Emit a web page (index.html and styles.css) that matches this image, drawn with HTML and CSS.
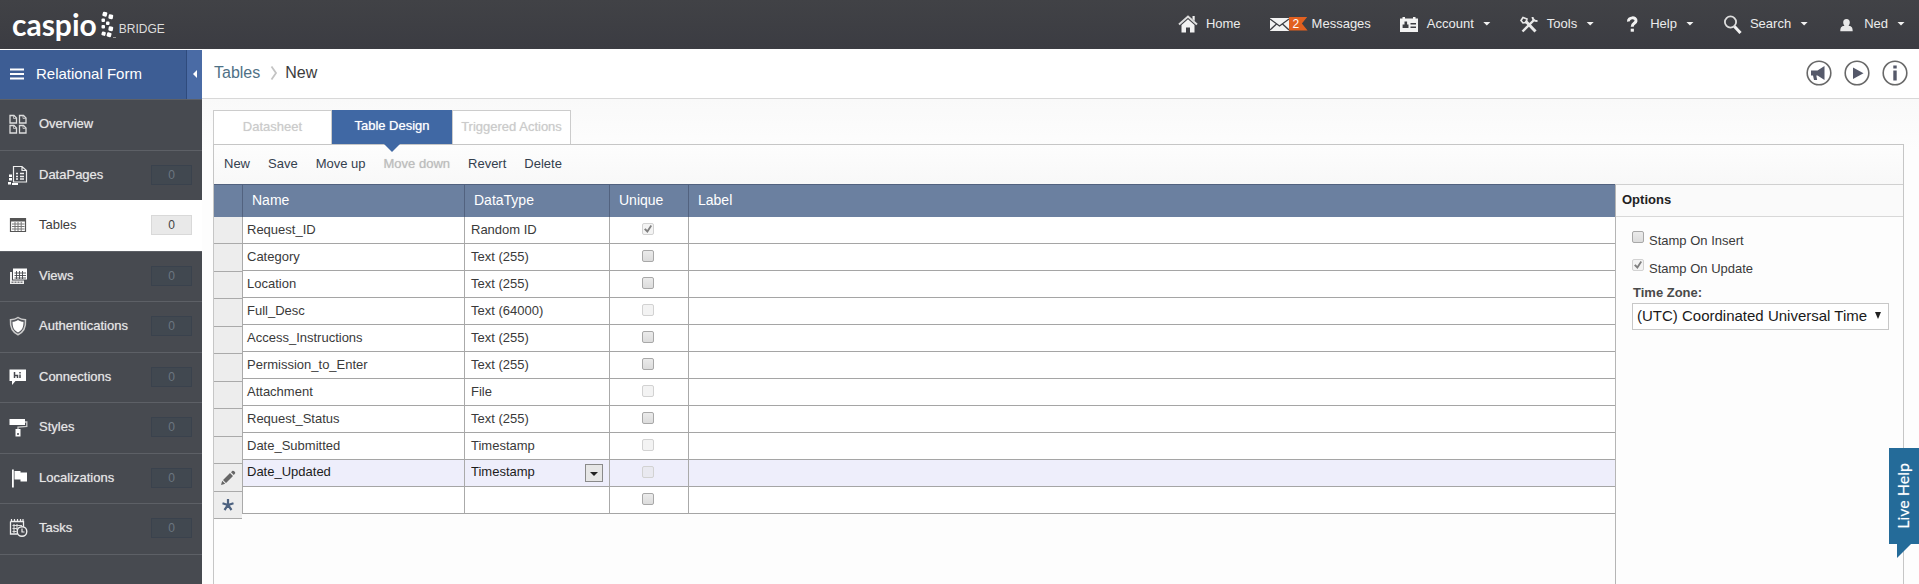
FILE: index.html
```html
<!DOCTYPE html>
<html lang="en">
<head>
<meta charset="utf-8">
<title>Caspio Bridge - Tables</title>
<link rel="stylesheet" href="styles.css">
</head>
<body>
<header class="topbar">
  <a class="logo" href="#">
    <span class="logo-word">caspio</span>
    <svg class="logo-dots" viewBox="0 0 17 30" width="17" height="30" aria-hidden="true">
      <g fill="#fff">
        <rect x="2.500" y="2" width="4.500" height="4.500" rx="1" transform="rotate(15 5 4.500)"/>
        <rect x="8.500" y="4.500" width="4.500" height="4.500" rx="1" transform="rotate(10 11 7)"/>
        <rect x="1.500" y="8.500" width="3.500" height="3.500" rx="1"/>
        <rect x="6" y="11.500" width="3.500" height="3.500" rx="1"/>
        <rect x="1.500" y="15" width="3.500" height="3.500" rx="1"/>
        <rect x="8.500" y="16.500" width="4.500" height="4.500" rx="1" transform="rotate(10 11 19)"/>
        <rect x="1.500" y="21.500" width="4" height="4" rx="1" transform="rotate(15 3 24)"/>
        <rect x="6.500" y="22.500" width="4.500" height="4.500" rx="1" transform="rotate(15 9 26)"/>
      </g>
      <path d="M13 27.500h3" stroke="#999" stroke-width="1"/>
    </svg>
    <span class="logo-sub">BRIDGE</span>
  </a>
  <nav class="topnav">
    <a class="nav-item" href="#"><svg class="nav-icon" viewBox="0 0 20 20"><path d="M1 10.500 10 2.500l9 8" fill="none" stroke="#ddd" stroke-width="2"/><path d="M14.500 2h2.200v5l-2.200-2zM3.500 11 10 5.200l6.500 5.800v7.500h-4.500v-5H8v5H3.500z" fill="#f2f2f2"/></svg>Home</a>
    <a class="nav-item nav-messages" href="#"><span class="mail"><svg class="nav-icon" viewBox="0 0 20 20"><path d="M1 4h19v13H1z" fill="#f2f2f2"/><path d="m1 5 9.500 7L20 5M1 16l6.500-6M20 16l-6.500-6" fill="none" stroke="#3d3e43" stroke-width="1.300"/></svg><span class="flag">2</span></span>Messages</a>
    <a class="nav-item" href="#"><svg class="nav-icon" viewBox="0 0 20 20"><path d="M1 4.500h2.500V3H6v1.500h8V3h2.500v1.500H19V18H1z" fill="#f2f2f2"/><path d="M5.500 7.500h2.600v3h1.400V14H3.600v-3.500h1.900zM11.500 9h5.500v1.600h-5.500zM11.500 12.500h5.500v1.600h-5.500z" fill="#3d3e43"/></svg>Account<i class="caret"></i></a>
    <a class="nav-item" href="#"><svg class="nav-icon" viewBox="0 0 20 20"><g fill="none" stroke="#e8e8e8"><path d="m6.500 7 10 10.500" stroke-width="3"/><path d="M3.500 17.500 15 6" stroke-width="2.400"/><path d="M13.500 3c.2 3 1.500 4 5 4" stroke-width="2"/><path d="m2 6.500 2-3 4 1.500-1 3.500-3 .500z" stroke-width="1.600"/></g></svg>Tools<i class="caret"></i></a>
    <a class="nav-item" href="#"><svg class="nav-icon" viewBox="0 0 20 20"><path d="M6.500 7.500C6 3 14.500 2.500 14 7c-.300 2.500-3.800 2.300-3.800 5.700" fill="none" stroke="#f2f2f2" stroke-width="3"/><path d="M8.700 14.700h3.200v3H8.700z" fill="#f2f2f2"/></svg>Help<i class="caret"></i></a>
    <a class="nav-item" href="#"><svg class="nav-icon" viewBox="0 0 20 20"><circle cx="8.500" cy="8" r="5.600" fill="none" stroke="#ddd" stroke-width="1.800"/><path d="m12.500 12.500 6 6.500" stroke="#f2f2f2" stroke-width="3"/></svg>Search<i class="caret"></i></a>
    <a class="nav-item" href="#"><svg class="nav-icon" viewBox="0 0 20 20"><path d="M10.500 5c2.300 0 3.300 1.500 3.300 3.500 0 1.700-.8 2.500-1.300 3.300 2.500.3 4.200 1 4.200 5.500h-12.400c0-4.500 1.700-5.200 4.200-5.500-.5-.8-1.300-1.600-1.300-3.300C7.200 6.500 8.200 5 10.500 5z" fill="#e8e8e8"/></svg>Ned<i class="caret"></i></a>
  </nav>
</header>

<div class="layout">
  <aside class="sidebar">
    <div class="app-head">
      <button class="app-menu" type="button"><svg viewBox="0 0 14 12" width="14" height="12" aria-hidden="true"><path d="M0 1.500h14M0 6h14M0 10.500h14" stroke="#fff" stroke-width="2.200"/></svg>Relational Form</button>
      <button class="collapse" type="button" aria-label="Collapse"><svg viewBox="0 0 6 8" width="4" height="8" preserveAspectRatio="none"><path d="M6 0v8L0 4z" fill="#fff"/></svg></button>
    </div>
    <nav class="side-list">
      <a class="side-item" href="#"><svg class="side-icon" viewBox="0 0 20 20"><path d="M2 1.500h4l2.500 2.500v5H2zM11.500 1.500h4L18 4v5h-6.500zM2 11.500h4L8.500 14v5H2zM11.500 11.500h4L18 14v5h-6.500z" fill="none" stroke="#ddd" stroke-width="1.300"/><path d="M5.500 1.500v3h3M15 1.500v3h3M5.500 11.500v3h3M15 11.500v3h3" fill="none" stroke="#ccc" stroke-width=".8"/></svg><span>Overview</span></a>
      <a class="side-item" href="#"><svg class="side-icon" viewBox="0 0 20 20"><path d="M5.500 1.500H14l4.500 4V17h-13zM14 1.500v4h4.500" fill="none" stroke="#eee" stroke-width="1.200"/><path d="M8 8.500h2M8 11.500h2M8 14h2M12 8.500h4M12 11.500h4M12 14h4" stroke="#eee" stroke-width="1.600"/><path d="M1 9.500h3V12H1zM1 13h3v2.500H1zM0 17h3v2.500H0zM4 18h6v2H4z" fill="#fff"/></svg><span>DataPages</span><b class="count">0</b></a>
      <a class="side-item active" href="#"><svg class="side-icon" viewBox="0 0 20 20"><path d="M2.500 3.500h15v13h-15z" fill="#fff" stroke="#555" stroke-width="1.200"/><path d="M2 3h16v3.500H2z" fill="#555"/><path d="M4 9h12.500M4 11.500h12.500M4 14h12.500M7 7v9M10 7v9M13.200 7v9" stroke="#777" stroke-width="1"/></svg><span>Tables</span><b class="count">0</b></a>
      <a class="side-item" href="#"><svg class="side-icon" viewBox="0 0 20 20"><path d="M2 6h14v12H2z" fill="#eee"/><path d="M4 3h15v11.500H4z" fill="#47494f"/><path d="M5 2.500h14v11H5z" fill="#fff"/><path d="M6.500 7H18M6.500 9.500H18M6.500 12H18M8.500 5v8M11.500 5v8M14.500 5v8" stroke="#47494f" stroke-width=".9"/><path d="M3.500 16.200h11" stroke="#47494f" stroke-dasharray="2 1"/></svg><span>Views</span><b class="count">0</b></a>
      <a class="side-item" href="#"><svg class="side-icon" viewBox="0 0 20 20"><path d="M10 1.500c2 1.500 4.500 2.200 7.500 2.200.5 6.800-1 12-7.500 15-6.500-3-8-8.200-7.500-15 3 0 5.500-.7 7.500-2.200z" fill="#55575d" stroke="#ccc" stroke-width="1.500"/><path d="M10 4c1.500 1.200 3.500 1.700 5.500 1.800 0 5-1 8.400-5.500 10.800-4.500-2.400-5.500-5.800-5.500-10.800C6.500 5.700 8.500 5.200 10 4z" fill="#fff"/></svg><span>Authentications</span><b class="count">0</b></a>
      <a class="side-item" href="#"><svg class="side-icon" viewBox="0 0 20 20"><path d="M1.500 2.500H18v11.500H7.500L4 18v-4H1.500z" fill="#fff"/><path d="M6.500 5v6M6.500 8.500h3V11M12 7.500V11M12 5v1.400" fill="none" stroke="#47494f" stroke-width="1.500"/></svg><span>Connections</span><b class="count">0</b></a>
      <a class="side-item" href="#"><svg class="side-icon" viewBox="0 0 20 20"><path d="M1.500 2H17v6H1.500z" fill="#fff"/><path d="M17 5h1.800v4.500l-8.800.500v2" fill="none" stroke="#ccc" stroke-width="1.300"/><path d="M7.500 12h5v7.500h-5z" fill="#fff"/><circle cx="10" cy="17" r="1" fill="#47494f"/></svg><span>Styles</span><b class="count">0</b></a>
      <a class="side-item" href="#"><svg class="side-icon" viewBox="0 0 20 20"><path d="M4 1.500h1.800v18H4z" fill="#fff"/><path d="M6.500 3h6v1.500h6.500v9h-6.500V11.500h-6z" fill="#fff"/></svg><span>Localizations</span><b class="count">0</b></a>
      <a class="side-item" href="#"><svg class="side-icon" viewBox="0 0 20 20"><path d="M2.500 3.500h13V9M2.500 3.500v12.500h7" fill="none" stroke="#eee" stroke-width="1.300"/><path d="M3.500 1v3M6.500 1v3M9.500 1v3M12.500 1v3M15 1v3" stroke="#eee" stroke-width="1.200"/><path d="M4.500 7.500H14M4.500 10.500h5M4.500 13.500h4M6 6v9M9 6v6" stroke="#ddd" stroke-width="1.100"/><circle cx="14" cy="13.500" r="4.800" fill="#47494f" stroke="#eee" stroke-width="1.400"/><path d="M14 10.500v3.500h2.500" fill="none" stroke="#eee" stroke-width="1.200"/></svg><span>Tasks</span><b class="count">0</b></a>
    </nav>
  </aside>

  <main class="main">
    <div class="crumbs">
      <a class="crumb-link" href="#">Tables</a>
      <svg class="crumb-sep" viewBox="0 0 8 16" width="8" height="16" aria-hidden="true"><path d="m1.500 1.500 4.500 6.500-4.500 6.500" fill="none" stroke="#c4c4c4" stroke-width="1.800"/></svg>
      <span class="crumb-here">New</span>
      <div class="round-actions">
        <button class="round" type="button" aria-label="Announcements"><svg viewBox="0 0 26 26"><circle cx="13" cy="13" r="11.800"/><path d="M5 10.500h6.500l7-4.500v14l-7-4.500h-1.200l.9 4.500H8l-1-4.500H5z" class="fill"/></svg></button>
        <button class="round" type="button" aria-label="Play"><svg viewBox="0 0 26 26"><circle cx="13" cy="13" r="11.800"/><path d="m9 7.500 10.500 5.700L9 19z" class="fill"/></svg></button>
        <button class="round" type="button" aria-label="Information"><svg viewBox="0 0 26 26"><circle cx="13" cy="13" r="11.800"/><path d="M11.300 5.500h3.400v3h-3.400zM11.300 10.500h3.400v10h-3.400z" class="fill"/></svg></button>
      </div>
    </div>

    <div class="work">
      <div class="tabs">
        <button class="tab" type="button" disabled>Datasheet</button>
        <button class="tab current" type="button">Table Design</button>
        <button class="tab" type="button" disabled>Triggered Actions</button>
      </div>
      <section class="panel">
        <div class="toolbar">
          <button type="button">New</button>
          <button type="button">Save</button>
          <button type="button">Move up</button>
          <button type="button" disabled>Move down</button>
          <button type="button">Revert</button>
          <button type="button">Delete</button>
        </div>
        <div class="designer">
          <div class="gutter">
            <div class="gutter-head"></div>
            <div class="gutter-row"></div><div class="gutter-row"></div><div class="gutter-row"></div>
            <div class="gutter-row"></div><div class="gutter-row"></div><div class="gutter-row"></div>
            <div class="gutter-row"></div><div class="gutter-row"></div><div class="gutter-row"></div>
            <div class="gutter-row"><svg viewBox="0 0 16 16" width="16" height="16"><path d="m1 15 1.200-4.200 3 3zM3 10l7-7 3 3-7 7zM11 2.200 12.300.9c1.200-1 3.800 1.400 2.700 2.700l-1.200 1.500z" fill="#666"/></svg></div>
            <div class="gutter-row"><svg viewBox="0 0 12 12" width="12" height="12"><path d="M6 0v6M.5 4.300 6 6l5.500-1.700M2.500 11 6 6l3.500 5" fill="none" stroke="#4d6280" stroke-width="2.200"/></svg></div>
          </div>
          <table class="fields">
            <colgroup><col class="c-name"><col class="c-type"><col class="c-unique"><col></colgroup>
            <thead><tr><th>Name</th><th>DataType</th><th>Unique</th><th>Label</th></tr></thead>
            <tbody>
              <tr><td>Request_ID</td><td>Random ID</td><td class="tick"><input type="checkbox" aria-label="Unique" checked disabled></td><td></td></tr>
              <tr><td>Category</td><td>Text (255)</td><td class="tick"><input type="checkbox" aria-label="Unique"></td><td></td></tr>
              <tr><td>Location</td><td>Text (255)</td><td class="tick"><input type="checkbox" aria-label="Unique"></td><td></td></tr>
              <tr><td>Full_Desc</td><td>Text (64000)</td><td class="tick"><input type="checkbox" aria-label="Unique" disabled></td><td></td></tr>
              <tr><td>Access_Instructions</td><td>Text (255)</td><td class="tick"><input type="checkbox" aria-label="Unique"></td><td></td></tr>
              <tr><td>Permission_to_Enter</td><td>Text (255)</td><td class="tick"><input type="checkbox" aria-label="Unique"></td><td></td></tr>
              <tr><td>Attachment</td><td>File</td><td class="tick"><input type="checkbox" aria-label="Unique" disabled></td><td></td></tr>
              <tr><td>Request_Status</td><td>Text (255)</td><td class="tick"><input type="checkbox" aria-label="Unique"></td><td></td></tr>
              <tr><td>Date_Submitted</td><td>Timestamp</td><td class="tick"><input type="checkbox" aria-label="Unique" disabled></td><td></td></tr>
              <tr class="editing"><td><input class="cell-input" type="text" aria-label="Name" value="Date_Updated"></td><td><div class="cell-select"><select aria-label="DataType"><option>Timestamp</option></select><i class="drop"></i></div></td><td class="tick"><input type="checkbox" aria-label="Unique" disabled></td><td></td></tr>
              <tr><td></td><td></td><td class="tick"><input type="checkbox" aria-label="Unique"></td><td></td></tr>
            </tbody>
          </table>
          <aside class="options">
            <h2>Options</h2>
            <div class="options-body">
              <label class="check"><input type="checkbox">Stamp On Insert</label>
              <label class="check"><input type="checkbox" checked disabled>Stamp On Update</label>
              <label class="zone-label" for="zone">Time Zone:</label>
              <div class="zone"><select id="zone"><option>(UTC) Coordinated Universal Time</option></select></div>
            </div>
          </aside>
        </div>
      </section>
    </div>
  </main>
</div>

<button class="live-help" type="button"><span>Live Help</span><svg viewBox="0 0 14 14" width="14" height="14" aria-hidden="true"><path d="M0 0h14L0 14z" fill="#246b99"/></svg></button>
</body>
</html>
```
FILE: styles.css
```css
* { box-sizing: border-box; }

body {
  margin: 0;
  height: 100vh;
  display: flex;
  flex-direction: column;
  overflow: hidden;
  background: #fff;
  color: #3a3a3a;
  font: 13px/20px "Liberation Sans", Arial, sans-serif;
}

a { color: inherit; text-decoration: none; }
button, select, input { font: inherit; color: inherit; }
button { border: 0; padding: 0; background: none; }

/* Top bar */
.topbar {
  flex: none;
  display: flex;
  justify-content: space-between;
  align-items: center;
  height: 49px;
  padding: 0 14px 0 12px;
  background: linear-gradient(#414246, #3b3c42);
  color: #ececec;
}
.logo { display: flex; align-items: center; color: #fff; }
.logo-word { font: bold 30px/40px Lato, sans-serif; padding-bottom: 2px; }
.logo-dots { margin: 0 2px 0 3px; }
.logo-sub { font-size: 12px; padding-top: 8px; color: #ddd; }
.topnav { display: flex; gap: 28px; padding-bottom: 2px; }
.nav-item { display: flex; align-items: center; gap: 8px; }
.nav-messages { gap: 4px; }
.nav-icon { width: 20px; height: 20px; flex: none; }
.mail { display: flex; align-items: center; }
.flag {
  width: 19px;
  height: 14px;
  padding-left: 4px;
  background: #e2601f;
  clip-path: polygon(0 0, 100% 0, 70% 50%, 100% 100%, 0 100%);
  color: #fff;
  font-size: 12px;
  line-height: 14px;
}
.caret {
  width: 8px;
  height: 4px;
  margin-left: 1px;
  background: #f2f2f2;
  clip-path: polygon(0 0, 100% 0, 50% 100%);
}

/* Sidebar */
.layout { flex: 1; display: flex; min-height: 0; }
.sidebar {
  flex: none;
  width: 202px;
  margin-top: 1px;
  background: #474a50;
  color: #e6e6e6;
}
.app-head { display: flex; height: 49px; background: #3d5d94; }
.app-menu {
  flex: 1;
  display: flex;
  align-items: center;
  gap: 12px;
  padding: 0 0 2px 10px;
  color: #fff;
  font-size: 15px;
}
.collapse {
  width: 16px;
  padding-bottom: 2px;
  border-left: 1px solid #2f4b7d;
  background: #4a6ba5;
}
.side-list { border-bottom: 1px solid #5d6066; }
.side-item {
  display: flex;
  align-items: center;
  height: 50px;
  padding: 0 10px 2px 8px;
  border-top: 1px solid #5d6066;
  text-shadow: 0 0 1px rgba(230, 230, 230, .6);
}
.side-item:nth-child(odd) { height: 51px; }
.side-icon { width: 20px; height: 20px; margin-right: 11px; flex: none; }
.count {
  width: 41px;
  height: 20px;
  margin-left: auto;
  border: 1px solid #3a424d;
  background: #414850;
  color: #6c7680;
  font-weight: normal;
  font-size: 12px;
  line-height: 18px;
  text-align: center;
  text-shadow: none;
}
.side-item.active {
  border-top-color: #fff;
  background: #fff;
  color: #3c3c3c;
  text-shadow: none;
}
.active .count { border-color: #d9d9d9; background: #e9e9e9; color: #444; }

/* Breadcrumb strip */
.main { flex: 1; min-width: 0; display: flex; flex-direction: column; }
.crumbs {
  flex: none;
  display: flex;
  align-items: center;
  height: 50px;
  padding: 0 11px 2px 12px;
  border-bottom: 1px solid #d8d8d8;
  font-size: 16px;
  color: #3c3c3c;
}
.crumb-link { color: #4f7186; }
.crumb-sep { margin: 0 7px 0 10px; }
.round-actions { margin-left: auto; display: flex; gap: 12px; }
.round { width: 26px; height: 26px; }
.round svg { display: block; fill: none; stroke: #686868; stroke-width: 1.6; }
.round .fill { fill: #55596a; stroke: none; }

/* Work area */
.work {
  flex: 1;
  display: flex;
  flex-direction: column;
  min-height: 0;
  padding: 11px 15px 0 11px;
  background: linear-gradient(#f9f9f9, #fdfdfd 50px);
}
.tabs { display: flex; height: 34px; }
.tab {
  width: 119px;
  padding-bottom: 2px;
  border: 1px solid #ccc;
  border-bottom: 0;
  background: #fff;
  color: #cbcbcb;
  text-shadow: 0 0 1px #ddd;
}
.tab.current {
  position: relative;
  width: 120px;
  border: 0;
  background: #4068a4;
  color: #fff;
  text-shadow: 0 0 1px rgba(255, 255, 255, .7);
}
.tab.current::after {
  content: "";
  position: absolute;
  top: 100%;
  left: calc(50% - 8px);
  width: 16px;
  height: 8px;
  background: #4068a4;
  clip-path: polygon(0 0, 100% 0, 50% 100%);
}
.panel {
  flex: 1;
  display: flex;
  flex-direction: column;
  min-height: 0;
  border: 1px solid #c6c6c6;
  border-bottom: 0;
  background: #fdfdfd;
}
.toolbar {
  flex: none;
  display: flex;
  gap: 18px;
  height: 39px;
  padding: 0 10px 2px;
  background: linear-gradient(#fdfdfd, #f8f8f8);
  color: #34404e;
}
.toolbar button:disabled { color: #bdbdbd; text-shadow: 0 0 1px #ccc; }
.designer { flex: 1; display: flex; align-items: flex-start; min-height: 0; }

/* Row selector column */
.gutter { flex: none; width: 28px; }
.gutter-head { height: 33px; background: #6b80a0; border-top: 1px solid #52627f; }
.gutter-row {
  display: flex;
  align-items: center;
  justify-content: center;
  height: 28px;
  border-bottom: 1px solid #aaa;
  background: #ededed;
}
.gutter-row:nth-child(even) { height: 27px; }

/* Field table */
.fields {
  flex: 1;
  min-width: 0;
  border-collapse: separate;
  border-spacing: 0;
  table-layout: fixed;
  background: #fff;
}
.c-name { width: 222px; }
.c-type { width: 145px; }
.c-unique { width: 79px; }
.fields th {
  height: 33px;
  padding: 0 9px 2px;
  border-top: 1px solid #52627f;
  border-left: 1px solid #52627f;
  background: #6b80a0;
  color: #fff;
  font-weight: normal;
  font-size: 14px;
  text-align: left;
}
.fields td {
  height: 27px;
  padding: 0 6px;
  border-left: 1px solid #aaa;
  border-bottom: 1px solid #a5a5a5;
}
.fields td:first-child { padding-left: 4px; }
.fields .tick { padding: 0 2px 2px 0; text-align: center; line-height: 0; }
.fields .editing td { padding-bottom: 2px; background: #eeeefb; color: #1c1c1c; }
.cell-input {
  display: block;
  width: 100%;
  height: 20px;
  padding: 0;
  border: 0;
  background: none;
}
.cell-select { display: flex; align-items: center; height: 20px; position: relative; }
.cell-select select {
  appearance: none;
  width: 100%;
  padding: 0;
  border: 0;
  background: none;
}
.drop {
  position: absolute;
  right: 0;
  top: 2px;
  width: 18px;
  height: 18px;
  border: 1px solid #8a8a8a;
  background: #e6e6e6;
  pointer-events: none;
}
.drop::after {
  content: "";
  display: block;
  width: 8px;
  height: 4px;
  margin: 7px 4px;
  background: #222;
  clip-path: polygon(0 0, 100% 0, 50% 100%);
}

/* Tick boxes */
input[type="checkbox"] {
  appearance: none;
  flex: none;
  display: inline-block;
  width: 12px;
  height: 12px;
  margin: 0;
  border: 1px solid #a8a8a8;
  border-radius: 2px;
  background: linear-gradient(#ebebeb, #dcdcdc);
}
input[type="checkbox"]:disabled { border-color: #d2d2d2; background: #f3f3f3; }
input[type="checkbox"]:checked::before {
  content: "";
  display: block;
  width: 8px;
  height: 8px;
  margin: 1px;
  background: #808080;
  clip-path: polygon(0 55%, 20% 40%, 40% 62%, 82% 0, 100% 12%, 44% 100%);
}
.editing input[type="checkbox"] { background: #e9e9f0; }

/* Options pane */
.options {
  flex: none;
  align-self: stretch;
  width: 288px;
  border-top: 1px solid #d0d0d0;
  border-left: 1px solid #b5b5b5;
}
.options h2 {
  margin: 0;
  height: 32px;
  padding: 5px 6px;
  border-bottom: 1px solid #d8d8d8;
  background: #fafafa;
  color: #222;
  font-size: 13px;
  line-height: 20px;
}
.options-body { padding: 14px 14px 0 16px; display: flex; flex-direction: column; }
.check { display: flex; align-items: flex-start; gap: 5px; height: 24px; line-height: 20px; }
.check + .check { margin-top: 4px; }
.zone-label { padding-left: 1px; font-weight: bold; color: #4a4a4a; }
.zone { position: relative; }
.zone select {
  appearance: none;
  display: block;
  width: 100%;
  height: 27px;
  padding: 0 4px 2px;
  border: 1px solid #c8c8c8;
  background: #fff;
  color: #1a1a1a;
  font-size: 15px;
}
.zone::after {
  content: "";
  position: absolute;
  right: 8px;
  top: 9px;
  width: 6px;
  height: 7px;
  background: #222;
  clip-path: polygon(0 0, 100% 0, 50% 100%);
  pointer-events: none;
}

/* Floating help tab */
.live-help {
  position: fixed;
  right: 0;
  bottom: 40px;
  width: 30px;
  height: 96px;
  padding: 4px 2px 0 0;
  background: #246b99;
  color: #fff;
  font: 16px/20px Lato, sans-serif;
  text-shadow: 0 0 1px rgba(255, 255, 255, .6);
}
.live-help span { display: inline-block; writing-mode: vertical-rl; transform: rotate(180deg); }
.live-help svg { position: absolute; left: 8px; top: 100%; }
```
